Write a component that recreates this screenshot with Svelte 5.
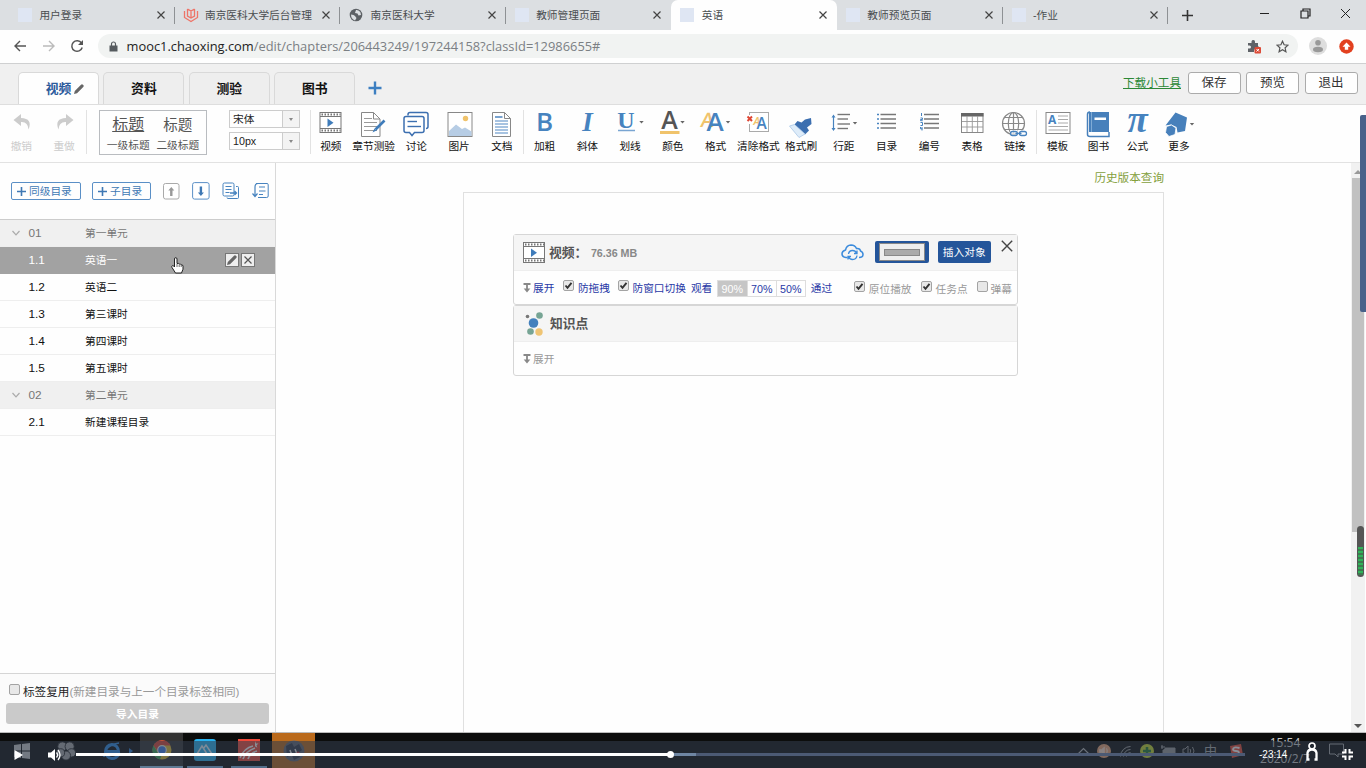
<script>
  const browserTabs = [
    { title: '用户登录', icon: 'blank' },
    { title: '南京医科大学后台管理', icon: 'book' },
    { title: '南京医科大学', icon: 'globe' },
    { title: '教师管理页面', icon: 'blank' },
    { title: '英语', icon: 'blank', active: true },
    { title: '教师预览页面', icon: 'blank' },
    { title: '-作业', icon: 'blank' },
  ];

  const courseTabs = ['视频', '资料', '测验', '图书'];
  let currentTab = $state('视频');

  const caret = (x, y = 11) => `<path d="M${x - 2.2} ${y}h4.4l-2.2 2.6z" fill="#666"/>`;
  const lines = (x1, x2, ys, color = '#777', w = 1) =>
    ys.map((y) => `<path d="M${x1} ${y}H${x2}" stroke="${color}" stroke-width="${w}"/>`).join('');

  // every icon is drawn on a 43 x 28 grid
  const icons = {
    video: `<rect x="11" y="2.5" width="21" height="20" fill="#fff" stroke="#777"/><path d="M11 6.5h21M11 18.5h21" stroke="#777"/><path d="M12.5 4.5h19M12.5 20.5h19" stroke="#777" stroke-width="2" stroke-dasharray="1.5 1.5"/><path d="M18.5 8.5l6 4.2-6 4.2z" fill="#3f7cba"/>`,
    quiz: `<path d="M9.5 2.5h12l6.5 6.5v17.5h-18.5z" fill="#fff" stroke="#888"/><path d="M21.5 2.5v6.5h6.5" fill="none" stroke="#888"/>${lines(12, 20, [8.5], '#999')}${lines(12, 25, [12.5, 16.5, 20.5], '#999')}<path d="M32.5 10.5L23.5 19.5" stroke="#3f7cba" stroke-width="2.6"/><path d="M22.500 18.500l-2 4 4-2z" fill="#3f7cba"/>`,
    talk: `<path d="M13 5.5V4.5q0-2 2-2h16q2 0 2 2v12q0 2-2 2" fill="none" stroke="#3c6fb0" stroke-width="1.5"/><path d="M11 6.5h16q2 0 2 2v12q0 2-2 2h-7.5l-2.5 3-2.5-3H11q-2 0-2-2v-12q0-2 2-2z" fill="#fff" stroke="#3c6fb0" stroke-width="1.5"/>${lines(12.5, 22, [11.5], '#3c6fb0', 1.4)}${lines(12.5, 26, [16.5], '#3c6fb0', 1.4)}`,
    image: `<rect x="10" y="2.5" width="24" height="24" fill="#fff" stroke="#888"/><circle cx="27.500" cy="8.500" r="2.700" fill="#f0c36b"/><path d="M11 21l7-6.500 6 4.500 3-1.500 6.500 4v4.500H11z" fill="#b7cde5"/>`,
    doc: `<path d="M12.5 2.5h12l6 6v18h-18z" fill="#fff" stroke="#888"/><path d="M24.5 2.5v6h6" fill="none" stroke="#888"/>${lines(15, 22.5, [7], '#3f7cba', 1.4)}${lines(15, 28, [11, 14, 17, 20, 23], '#5f93c8', 1.1)}`,
    bold: `<text x="21.5" y="21" text-anchor="middle" font-family="Open Sans" font-weight="600" font-size="26" fill="#4783bf">B</text>`,
    italic: `<text x="21.5" y="21" text-anchor="middle" font-family="Liberation Serif" font-weight="700" font-style="italic" font-size="27" fill="#4783bf">I</text>`,
    underline: `<text x="17" y="18" text-anchor="middle" font-family="Liberation Serif" font-weight="700" font-size="24" fill="#4783bf">U</text><path d="M9 20.5h17" stroke="#79a5d2" stroke-width="1.5"/>${caret(32.5)}`,
    color: `<text x="18.5" y="19" text-anchor="middle" font-family="Open Sans" font-weight="600" font-size="25" fill="#555">A</text><rect x="9" y="21" width="19.500" height="3" fill="#f0c36b"/>${caret(31.5)}`,
    format: `<text x="6" y="17" font-family="Open Sans" font-weight="600" font-size="20" fill="#f0c36b" transform="skewX(-8) translate(2.500 0)">A</text><text x="12.500" y="21" font-family="Open Sans" font-weight="600" font-size="26" fill="#4783bf">A</text>${caret(34)}`,
    clear: `<rect x="12.5" y="2.5" width="19" height="19" fill="#fff" stroke="#aaa"/><rect x="9" y="5" width="7" height="9" fill="#fff"/><path d="M10.5 6.5l4.500 4.500m0-4.500l-4.500 4.500" stroke="#df4634" stroke-width="2"/><text x="16.500" y="15" font-family="Open Sans" font-style="italic" font-weight="600" font-size="11" fill="#f0c36b">A</text><text x="19.500" y="18.500" font-family="Open Sans" font-weight="600" font-size="15.500" fill="#4783bf">A</text>`,
    brush: `<path d="M31 8l-6 1.5-3.5 3-4-1.5-3 3.5 10.5 10 4-4-2-3 4.5-3.5z" fill="#3c6fb0"/><path d="M14.5 14.5l-5 1.5 9.5 11.5 6-3.5z" fill="#deecf9" stroke="#a9c6e6" stroke-width=".8"/>`,
    spacing: `<path d="M11.5 6v14" stroke="#4783bf" stroke-width="1.2"/><path d="M9.5 7.500l2-3 2 3zM9.500 18l2 3 2-3z" fill="#4783bf"/>${lines(15.5, 28, [4.5, 14], '#777', 1.4)}${lines(15.5, 26, [9, 18.5], '#777', 1.4)}${caret(33, 12)}`,
    list: `${lines(15.5, 31, [4.5, 9, 13.5, 18], '#777', 1.5)}${lines(12, 14, [4.5, 9, 13.5, 18], '#4783bf', 1.6)}`,
    numbers: `${lines(16, 31, [4.5, 9, 13.5, 18], '#777', 1.5)}<path d="M13.5 3v3M12.5 8h2v1.500h-2v1.200h2.200M12.500 12.500h2v3h-2M12.500 17v1.800h2M14 17v3.500" fill="none" stroke="#4783bf"/>`,
    table: `<rect x="10.5" y="3.5" width="21.5" height="19" fill="#fff" stroke="#888"/><rect x="10" y="3" width="22.5" height="3.5" fill="#666"/><path d="M16 6v16M21.3 6v16M26.6 6v16M11 11.5h21M11 17h21" stroke="#999" stroke-width=".9"/>`,
    link: `<g fill="none" stroke="#888" stroke-width="1.2"><circle cx="20.5" cy="13.500" r="11"/><ellipse cx="20.500" cy="13.500" rx="5.200" ry="11"/><path d="M20.500 2.500v22M9.500 13.500h22M12 7.500h17M12 19.500h17"/></g><rect x="17" y="20" width="18" height="7" fill="#fff" opacity=".7"/><g fill="none" stroke="#4783bf" stroke-width="1.300"><rect x="17.500" y="21.500" width="7" height="4" rx="2"/><rect x="26.500" y="21.500" width="7" height="4" rx="2"/><path d="M22.500 23.500h6"/></g>`,
    template: `<rect x="10" y="2.5" width="24" height="21" fill="#fff" stroke="#888"/><text x="12" y="14" font-family="Open Sans" font-weight="700" font-size="12" fill="#4783bf">A</text>${lines(22, 32, [6, 9.5, 13], '#aaa', 1)}${lines(12.5, 32, [16.5, 20], '#aaa', 1)}`,
    book: `<path d="M12 2h20v20H12z" fill="#4780bb"/><path d="M13 2q-2.5 0-2.5 2.5v20q0 2 2.5 2h19V22" fill="none" stroke="#4780bb" stroke-width="1.5"/><path d="M14.5 2v20" stroke="#7fabd6"/><rect x="17.500" y="7.500" width="11.500" height="2.500" fill="#fff"/>`,
    pi: `<text x="21.500" y="22" text-anchor="middle" font-family="Liberation Serif" font-style="italic" font-weight="700" font-size="37" fill="#4783bf">π</text>`,
    more: `<path d="M17.5 2.5l11.500 5-2 13.500-7.500 1.500-1-5.500-5.500-2.500-5.500 1z" fill="#4780bb"/><path d="M8.500 16.500l5-1.500 4.500 3-1 6.500-6 2-3.500-4z" fill="#4780bb" stroke="#fff" stroke-width=".8"/>${caret(34, 13)}`,
  };

  const toolGroups = [
    [
      ['video', '视频'],
      ['quiz', '章节测验'],
      ['talk', '讨论'],
      ['image', '图片'],
      ['doc', '文档'],
    ],
    [
      ['bold', '加粗'],
      ['italic', '斜体'],
      ['underline', '划线'],
      ['color', '颜色'],
      ['format', '格式'],
      ['clear', '清除格式'],
      ['brush', '格式刷'],
      ['spacing', '行距'],
      ['list', '目录'],
      ['numbers', '编号'],
      ['table', '表格'],
      ['link', '链接'],
    ],
    [
      ['template', '模板'],
      ['book', '图书'],
      ['pi', '公式'],
      ['more', '更多'],
    ],
  ];

  const chapters = [
    { no: '01', name: '第一单元', unit: true },
    { no: '1.1', name: '英语一' },
    { no: '1.2', name: '英语二' },
    { no: '1.3', name: '第三课时' },
    { no: '1.4', name: '第四课时' },
    { no: '1.5', name: '第五课时' },
    { no: '02', name: '第二单元', unit: true },
    { no: '2.1', name: '新建课程目录' },
  ];
  let selected = $state('1.1');
</script>

{#snippet check(on)}
  <svg class="check" width="11" height="11" viewBox="0 0 11 11">
    <rect x=".5" y=".5" width="10" height="10" rx="1.5" fill="#e8e8e8" stroke="#a3a3a3" />
    {#if on}<path d="M2.5 5.5l2 2.3 4-5" fill="none" stroke="#333" stroke-width="1.9" />{/if}
  </svg>
{/snippet}

{#snippet pencil()}
  <svg width="10" height="10" viewBox="0 0 10 10">
    <path d="M0 10l.8-3L7 .8Q8-.2 9.200 1T9 3.200L3 9.200z" fill="#666" />
  </svg>
{/snippet}

{#snippet expand()}
  <svg width="8" height="10" viewBox="0 0 8 10">
    <path d="M.5 1h7M4 2v5" stroke="#888" stroke-width="1.8" /><path d="M.7 5.500h6.600L4 9.500z" fill="#888" />
  </svg>
{/snippet}

<div class="screen">
  <div class="tabstrip">
    {#each browserTabs as tab}
      <div class="btab" class:active={tab.active}>
        <span class="favicon">
          {#if tab.icon === 'book'}
            <svg width="16" height="16" viewBox="0 0 16 16" fill="none" stroke="#ee7468" stroke-width="1.3">
              <path d="M1.5 4v6.5L8 14.5l6.5-4V4M4.5 2v7L8 11l3.5-2V2M8 4v7M4.5 2L8 4l3.5-2" />
            </svg>
          {:else if tab.icon === 'globe'}
            <svg width="14" height="14" viewBox="0 0 14 14">
              <circle cx="7" cy="7" r="6.3" fill="#5d6165" />
              <path d="M2 6.5q3 0 4 1.500t1.500 2L6 12.500Q2 11 2 6.500zM7 2q3-.5 4.500 2.500L12 7 9.500 7.500 8.500 5.500 6 5z" fill="#dcdfe2" />
            </svg>
          {:else}
            <span class="blank"></span>
          {/if}
        </span>
        <span class="btitle">{tab.title}</span>
        <svg width="8" height="8" viewBox="0 0 8 8"><path d="M.5.5l7 7m0-7l-7 7" stroke="#444" stroke-width="1.2" /></svg>
      </div>
    {/each}
    <svg class="newtab" width="11" height="11" viewBox="0 0 11 11"><path d="M5.500 0v11M0 5.500h11" stroke="#333" stroke-width="1.600" /></svg>
    <div class="winbtns">
      <svg width="11" height="11" viewBox="0 0 11 11"><path d="M1 5.500h9" stroke="#222" /></svg>
      <svg width="11" height="11" viewBox="0 0 11 11" fill="none" stroke="#222" stroke-width="1.200"><path d="M1 3h7v7H1zM3 3V1h7v7H8" /></svg>
      <svg width="11" height="11" viewBox="0 0 11 11"><path d="M1 1l9 9m0-9l-9 9" stroke="#222" /></svg>
    </div>
  </div>

  <div class="addressbar">
    <svg class="nav" width="14" height="14" viewBox="0 0 14 14" fill="none" stroke="#555" stroke-width="1.4"><path d="M13 7H2M7 2L2 7l5 5" /></svg>
    <svg class="nav" width="14" height="14" viewBox="0 0 14 14" fill="none" stroke="#bbb" stroke-width="1.4"><path d="M1 7h11M7 2l5 5-5 5" /></svg>
    <svg class="nav" width="14" height="14" viewBox="0 0 14 14"><path d="M11.500 4A5.300 5.300 0 1 0 12.200 8.500" fill="none" stroke="#555" stroke-width="1.500" /><path d="M13 1v5H8z" fill="#555" /></svg>
    <div class="omnibox">
      <svg width="9" height="11" viewBox="0 0 9 11"><path d="M.5 4.500h8V10.500h-8z" fill="#555a5e" /><path d="M2.500 5V3a2 2 0 0 1 4 0v2" fill="none" stroke="#555a5e" stroke-width="1.200" /></svg>
      <span class="url"><b>mooc1.chaoxing.com</b>/edit/chapters/206443249/197244158?classId=12986655#</span>
      <svg class="ext" width="15" height="15" viewBox="0 0 15 15">
        <path d="M1 4h3.500V2.500a1.800 1.800 0 0 1 3.500 0V4h3v3.500h1v3H7V13H1V9.500h1.500a1.500 1.500 0 0 0 0-3H1z" fill="#5f6368" />
        <rect x="7.500" y="8" width="6.500" height="6.500" rx="1" fill="#dc4b37" /><path d="M9.500 10l2.500 2.500m0-2.500l-2.500 2.500" stroke="#fff" />
      </svg>
      <svg width="13" height="13" viewBox="0 0 13 13"><path d="M6.500 1.200l1.600 3.600 3.900.4-2.900 2.600.8 3.900-3.400-2-3.400 2 .8-3.900L1 5.200l3.900-.4z" fill="none" stroke="#555" stroke-width="1.200" /></svg>
    </div>
    <svg class="avatar" width="18" height="18" viewBox="0 0 18 18"><circle cx="9" cy="9" r="9" fill="#dedede" /><circle cx="9" cy="5.800" r="2.800" fill="#999" /><ellipse cx="9" cy="12.500" rx="5" ry="2.700" fill="#999" /></svg>
    <svg width="15" height="15" viewBox="0 0 15 15"><circle cx="7.500" cy="7.500" r="7.200" fill="#e2401f" /><path d="M7.500 3.500l4 4.300H9.200v3H5.800v-3H3.500z" fill="#fff" /></svg>
  </div>

  <div class="coursebar">
    {#each courseTabs as tab}
      <button class="ctab" class:current={currentTab === tab} onclick={() => (currentTab = tab)}>
        {tab}{#if currentTab === tab}{@render pencil()}{/if}
      </button>
    {/each}
    <svg class="addtab" width="14" height="14" viewBox="0 0 14 14"><path d="M7 .5v13M.5 7h13" stroke="#3d7fc1" stroke-width="2.400" /></svg>
    <div class="actions">
      <a href="#tools">下载小工具</a>
      <button>保存</button>
      <button>预览</button>
      <button>退出</button>
    </div>
  </div>

  <div class="toolbar">
    <div class="history-tools">
      <div class="tool off">
        <svg width="43" height="28" viewBox="0 0 43 28"><path d="M21 4l-7.500 6 7.500 6v-4q7-.5 7.500 7.500 4.500-11-7.500-11.500z" fill="#ccc" /></svg>
        <span>撤销</span>
      </div>
      <div class="tool off">
        <svg width="43" height="28" viewBox="0 0 43 28"><path d="M23 4l7.500 6-7.500 6v-4q-7-.5-7.500 7.500-4.500-11 7.500-11.500z" fill="#ccc" /></svg>
        <span>重做</span>
      </div>
    </div>
    <div class="headings">
      <div><b class="h1">标题</b><span>一级标题</span></div>
      <div><b>标题</b><span>二级标题</span></div>
    </div>
    <div class="selects">
      <div class="select"><span>宋体</span><i></i></div>
      <div class="select"><span>10px</span><i></i></div>
    </div>
    {#each toolGroups as group}
      <div class="group">
        {#each group as [icon, label]}
          <div class="tool">
            <svg width="43" height="28" viewBox="0 0 43 28">{@html icons[icon]}</svg>
            <span>{label}</span>
          </div>
        {/each}
      </div>
    {/each}
  </div>

  <div class="main">
    <aside>
      <div class="sidetools">
        <button class="wide"><svg width="9" height="9" viewBox="0 0 9 9"><path d="M4.500 0v9M0 4.500h9" stroke="#3f78b4" stroke-width="1.600" /></svg>同级目录</button>
        <button class="wide sub"><svg width="9" height="9" viewBox="0 0 9 9"><path d="M4.500 0v9M0 4.500h9" stroke="#3f78b4" stroke-width="1.600" /></svg>子目录</button>
        <svg width="17" height="17" viewBox="0 0 17 17"><rect x=".5" y=".5" width="15.500" height="15.500" rx="2" fill="#fff" stroke="#aaa" /><path d="M8.300 4l3 3.500H9.500V13H7.100V7.500H5.300z" fill="#999" /></svg>
        <svg class="down" width="18" height="18" viewBox="0 0 18 18"><rect x=".6" y=".6" width="16.500" height="16.500" rx="2" fill="#fff" stroke="#5a8fc6" /><path d="M8.900 14l3-3.500h-1.800V4.500H7.700v6H5.900z" fill="#3f78b4" /></svg>
        <svg class="copy" width="18" height="18" viewBox="0 0 18 18" fill="none" stroke="#4783bf"><rect x="1" y="1" width="11" height="13" rx="1.500" /><path d="M3.500 4.500h6M3.500 7.500h6M3.500 10.500h4M14 4.500h1.500q1 0 1 1v10q0 1-1 1H6q-1 0-1-1" /><path d="M8 11h6M12.500 9l2 2-2 2" stroke-width="1.300" /></svg>
        <svg width="18" height="18" viewBox="0 0 18 18" fill="none" stroke="#4783bf"><path d="M8 5h6M8 9h6.500M8 12.500h4M5 1.500h11q1.200 0 1.200 1.200V14q0 1.500-1.500 1.500H7" /><path d="M7 1.500Q4 1.500 4 5v9M1.500 11.500L4 14.500l2.500-3" stroke-width="1.200" /></svg>
      </div>
      <ul>
        {#each chapters as row}
          <li class:unit={row.unit} class:selected={selected === row.no}>
            <span class="fold">
              {#if row.unit}<svg width="8" height="6" viewBox="0 0 8 6"><path d="M.5 1L4 4.800 7.500 1" fill="none" stroke="#aaa" stroke-width="1.200" /></svg>{/if}
            </span>
            <span class="no">{row.no}</span>
            <span class="name">{row.name}</span>
            {#if selected === row.no}
              <span class="rowbtn">{@render pencil()}</span>
              <span class="rowbtn"><svg width="8" height="8" viewBox="0 0 8 8"><path d="M.5.5l7 7m0-7l-7 7" stroke="#555" stroke-width="1.200" /></svg></span>
            {/if}
          </li>
        {/each}
      </ul>
      <div class="sidefoot">
        <div class="reuse">{@render check(false)}<span>标签复用<em>(新建目录与上一个目录标签相同)</em></span></div>
        <button>导入目录</button>
      </div>
    </aside>

    <div class="editor">
      <div class="history">历史版本查询</div>
      <div class="paper">
        <div class="card">
          <div class="cardhead">
            <svg width="22" height="21" viewBox="10.5 2 22 21">{@html icons.video}</svg>
            <b>视频：</b>
            <span class="size">76.36 MB</span>
            <svg class="cloud" width="23" height="17" viewBox="0 0 23 17" fill="none" stroke="#3b8bdc" stroke-width="1.5">
              <path d="M6.500 13.500H5Q1 13 1 9.800 1 7 4.500 6 5.500 1.200 10 1q4 0 5.500 3.500 3.500-.5 4 2.500 2.500 1 2.500 3.500 0 3-4 3" />
              <path d="M7.500 10q.5-3.500 4-3.500 3 0 4 2.500M16 11.500q-.5 4-4.500 4-3 0-4-3M16 6.500V9.500h-3M7 15.500v-3h3" stroke-width="1.300" />
            </svg>
            <span class="bluebtn"><span class="flash"><i></i></span></span>
            <span class="bluebtn insert">插入对象</span>
            <svg class="close" width="12" height="12" viewBox="0 0 12 12"><path d="M.8.8l10.400 10.400m0-10.400L.8 11.200" stroke="#444" stroke-width="1.400" /></svg>
          </div>
          <div class="cardbody">
            {@render expand()}<span class="t1">展开</span>
            {@render check(true)}<span class="t2">防拖拽</span>
            {@render check(true)}<span class="t3">防窗口切换</span>
            <span>观看</span>
            <span class="rates"><i class="on">90%</i><i>70%</i><i>50%</i></span>
            <span>通过</span>
            <span class="right">
              {@render check(true)}<span class="r1">原位播放</span>
              {@render check(true)}<span class="r2">任务点</span>
              {@render check(false)}<span>弹幕</span>
            </span>
          </div>
        </div>
        <div class="card second">
          <div class="cardhead">
            <svg class="knots" width="22" height="24" viewBox="0 0 22 24">
              <circle cx="9.500" cy="11" r="4.800" fill="#4380bd" /><circle cx="15.500" cy="3.500" r="3.300" fill="#76a494" /><circle cx="3.500" cy="4.500" r="1.800" fill="#777" />
              <circle cx="6.500" cy="19.500" r="3.300" fill="#76a494" /><circle cx="15" cy="20" r="3.700" fill="#efc473" />
            </svg>
            <b>知识点</b>
          </div>
          <div class="cardbody grey">{@render expand()}<span>展开</span></div>
        </div>
      </div>
    </div>
    <div class="scroll">
      <i class="arrow top"></i>
      <div class="thumb"></div>
      <i class="arrow"></i>
    </div>
  </div>

  <div class="taskbar">
    <div class="slot start"><svg width="16" height="16" viewBox="0 0 16 16" fill="#ccc"><path d="M0 2l7-1v6.500H0zM8 .9L16 0v7.500H8zM0 8.500h7V15l-7-1zM8 8.500h8V16l-8-1z" /></svg></div>
    <div class="slot fan">
      <svg width="20" height="20" viewBox="0 0 22 22" fill="#aaa" stroke="#222"><circle cx="7" cy="6" r="5" /><circle cx="15" cy="6" r="5" /><circle cx="17" cy="13" r="4.500" /><circle cx="11" cy="16" r="5" /><circle cx="5" cy="13" r="4.500" /></svg>
    </div>
    <div class="slot edge">
      <svg width="18" height="18" viewBox="0 0 18 18" fill="none" stroke="#2f8ee6"><path d="M15.500 12.500q-2 4-6.500 4-6-.5-6.500-7Q3 3 9 2.500q6 .5 6.500 7H4" stroke-width="3" /><path d="M1 15Q2 3 16 1" stroke-width="1.500" /></svg>
      <i></i>
    </div>
    <div class="slot on">
      <svg width="20" height="20" viewBox="0 0 20 20"><circle cx="10" cy="10" r="9.500" fill="#e8c234" /><path d="M1.500 5.500A9.500 9.500 0 0 1 18.500 5.500H10A4.500 4.500 0 0 0 6 12z" fill="#df4638" /><path d="M1.500 5.500L7 14.500l3 0-2 4.800A9.500 9.500 0 0 1 1.500 5.500z" fill="#3ea55a" /><circle cx="10" cy="10" r="4.300" fill="#3f7ff0" stroke="#eee" stroke-width="1.200" /></svg>
    </div>
    <div class="slot line">
      <svg width="22" height="22" viewBox="0 0 22 22"><rect width="22" height="22" rx="3" fill="#29b3f0" /><path d="M3 15L8 7l5 8M9.500 9.500L12 6l6 9" fill="none" stroke="#e4f6ff" stroke-width="1.500" /></svg>
    </div>
    <div class="slot line red">
      <svg width="22" height="22" viewBox="0 0 22 22"><rect width="22" height="22" fill="#f04a3a" /><path d="M2 19Q6 9 15 7M5 20q3-8 12-11M10 20q2-6 9-8" fill="none" stroke="#fff" stroke-width="1.700" /><path d="M17 2l1 2.500h2.500l-2 1.700.8 2.500-2.300-1.500z" fill="#fff" /></svg>
    </div>
    <div class="slot orange">
      <svg width="22" height="22" viewBox="0 0 22 22"><circle cx="11" cy="11" r="10.500" fill="#626673" /><path d="M3 6l6-3 2 4 5-3 3 6-4 3 2 4-6 3-2-5-5 2z" fill="#343a4a" /><path d="M7 10l2 6M12 9l2 5M6 14l3-1" stroke="#eee" stroke-width="1.500" /><circle cx="15" cy="13" r="1.500" fill="#c43c44" /></svg>
    </div>
    <div class="tray">
      <svg width="140" height="18" viewBox="0 0 140 18">
        <path d="M1 12l5.500-5.500L12 12" fill="none" stroke="#bbb" stroke-width="1.200" />
        <circle cx="27" cy="9" r="7" fill="#f0a878" /><path d="M22.500 7.500h2l3-2.500v8l-3-2.500h-2zM29.500 6q2 3 0 6" fill="#ffe0cc" stroke="#ffe0cc" stroke-width=".7" />
        <path d="M43.500 14.500a10 10 0 0 1 10-10M46.500 14.500a7 7 0 0 1 7-7M49.500 14.500a4 4 0 0 1 4-4" fill="none" stroke="#aaa" />
        <circle cx="70" cy="9" r="7" fill="#c6d82d" /><path d="M70 5v8M66 9h8" stroke="#237c32" stroke-width="2.500" />
        <path d="M88 6h10v7H86V8" fill="#999" stroke="#999" /><path d="M84 5h4M85 3v4" stroke="#aaa" />
        <path d="M106 7h2l3-3v10l-3-3h-2zM113 7q1.500 2 0 4M115.500 5q3 4 0 8" fill="none" stroke="#999" />
      </svg>
      <span>中</span>
      <svg class="sogou" width="14" height="14" viewBox="0 0 14 14"><path d="M1 2l11-2 2 11-11 3z" fill="#ef4b34" /><path d="M10.500 4Q4 2.500 4 5.300 4 7 7 7t3 2.300Q9.500 11.500 3.500 10" fill="none" stroke="#fff" stroke-width="1.800" /></svg>
      <div class="clock"><span>15:54</span><span>2020/2/7</span></div>
      <svg class="note" width="15" height="15" viewBox="0 0 15 15"><path d="M.5 1h14v10H9v3l-3-3H.5z" fill="none" stroke="#aaa" /></svg>
    </div>
    <div class="player">
      <svg width="9" height="10" viewBox="0 0 9 10"><path d="M.5 0L9 5 .5 10z" fill="#fff" /></svg>
      <svg class="vol" width="13" height="12" viewBox="0 0 13 12"><path d="M0 3.500h3L7 0v12L3 8.500H0z" fill="#fff" /><path d="M8.500 3.500q2 2.500 0 5M10 1q4 5 0 10" fill="none" stroke="#fff" stroke-width="1.300" /></svg>
      <div class="track"><div class="buffer"></div><div class="played"></div><div class="knob"></div></div>
      <span class="left">-23:14</span>
      <svg class="lock" width="12" height="19" viewBox="0 0 12 19"><circle cx="6" cy="4" r="3" fill="none" stroke="#fff" stroke-width="1.700" /><path d="M3.500 17.500H1.500V11Q2 7.500 6 7.500t4.500 3.500v6.500H8.500" fill="none" stroke="#fff" stroke-width="2.300" /></svg>
      <svg width="11" height="11" viewBox="0 0 11 11"><path d="M0 3.500h3.500V0M7.500 0v3.500H11M0 7.500h3.500V11M7.500 11V7.500H11" fill="none" stroke="#fff" stroke-width="2" /></svg>
    </div>
  </div>

  <div class="sidebadge"></div>
  <div class="meter"><i></i></div>
  <svg class="pointer" width="13" height="17" viewBox="0 0 13 17">
    <path d="M3.500 10V2q0-1.300 1.200-1.300T6 2v4.500q1.800-.6 2.200.6 1.600-.4 2 .7 1.800-.2 1.800 1.400v3L10.500 16h-6L1 10.500q-.8-1.500.5-1.800T3.500 10z" fill="#fff" stroke="#222" />
    <path d="M6 7v3M8.200 7.500V10M10.200 8v2" stroke="#444" stroke-width=".8" />
  </svg>
</div>

<style>
  :global(body) { background: #fff; overflow: hidden; }

  .screen {
    position: relative;
    display: flex;
    flex-direction: column;
    width: 1366px;
    height: 768px;
    overflow: hidden;
    background: #fefefe;
    font: 10.7px/14px "Liberation Sans", "Noto Sans CJK SC", sans-serif;
    color: #222;
  }
  .screen * { box-sizing: border-box; }
  svg { display: block; flex: none; }
  button { font: inherit; margin: 0; padding: 0; white-space: nowrap; }
  i, em { font-style: normal; }
  span, b { white-space: nowrap; }

  .tabstrip { display: flex; align-items: center; height: 30px; padding-left: 9px; background: #dcdfe2; }
  .btab {
    display: flex;
    align-items: center;
    width: 165.6px;
    height: 30px;
    padding: 0 10px 0 9px;
    background: linear-gradient(#8e9194, #8e9194) right center / 1px 17px no-repeat;
    color: #4a4d50;
  }
  .btab.active { background: #fefefe; border-radius: 7px 7px 0 0; }
  .btab:has(+ .active) { background: none; }
  .favicon { display: flex; justify-content: center; width: 14px; margin-right: 7.4px; }
  .blank { width: 14px; height: 14px; background: #dfe6f3; }
  .btitle { flex: 1; }
  .newtab { margin-left: 14px; }
  .winbtns { display: flex; gap: 29.5px; margin: 0 15px 4px auto; }

  .addressbar { display: flex; align-items: center; height: 34px; padding: 0 0 1px 13px; border-bottom: 1px solid #cfd0d1; }
  .nav { margin-right: 14.5px; }
  .omnibox { display: flex; align-items: center; width: 1200px; height: 24px; margin-left: -1px; padding: 0 9px 0 11px; border-radius: 12px; background: #f1f3f2; }
  .url { flex: 1; margin: -1px 0 0 9px; font: 12.87px/20px "Open Sans", sans-serif; color: #7b8084; }
  .url b { font-weight: 400; color: #222; }
  .ext { margin-right: 14px; }
  .avatar { margin: 0 12.5px 0 11px; }

  .coursebar { display: flex; height: 41px; padding: 8px 8.5px 0 18px; background: #f0f0f0; border-bottom: 1px solid #dedede; }
  .ctab {
    display: flex;
    align-items: center;
    justify-content: center;
    width: 81px;
    height: 32px;
    margin-right: 4.4px;
    border: 1px solid #d9d9d9;
    border-bottom: 0;
    border-radius: 5px 5px 0 0;
    background: #eee;
    color: #111;
    font-size: 12.8px;
    font-weight: 700;
  }
  .ctab.current { background: #fefefe; color: #2d5b9c; padding-left: 13px; }
  .ctab svg { margin-left: 3px; }
  .addtab { margin: 9px 0 0 8px; }
  .actions { display: flex; align-items: center; gap: 5.500px; height: 22px; margin-left: auto; }
  .actions a { margin-right: 1px; color: #2c8836; font-size: 11.6px; }
  .actions button { width: 53px; height: 22px; border: 1px solid #ababab; border-radius: 3px; background: #fefefe; color: #333; font-size: 12.5px; }

  .toolbar { display: flex; height: 58px; border-bottom: 1px solid #e2e2e2; }
  .history-tools { display: flex; width: 87px; background: linear-gradient(#e2e2e2, #e2e2e2) right 5px / 1px 44px no-repeat; }
  .tool { display: flex; flex-direction: column; align-items: center; width: 42.75px; padding-top: 5px; }
  .tool svg { overflow: visible; }
  .tool span { margin-top: 1px; color: #111; }
  .tool.off span { color: #ccc; }
  .headings {
    display: flex;
    width: 108px;
    height: 45px;
    margin: 5px 0 0 12px;
    border: 1px solid #b9bcc0;
    justify-content: space-evenly;
  }
  .headings div { display: flex; flex-direction: column; align-items: center; color: #555; }
  .headings b { height: 25px; margin-top: 2px; font-size: 14.5px; line-height: 24px; font-weight: 400; }
  .headings .h1 { font-size: 16px; text-decoration: underline; }
  .selects { display: flex; flex-direction: column; gap: 4px; width: 71px; margin: 5px 9.5px 0 22px; }
  .select { display: flex; height: 18px; border: 1px solid #ccc; }
  .select span { flex: 1; padding-left: 3px; line-height: 16px; color: #222; }
  .select i { display: flex; align-items: center; justify-content: center; width: 17px; border-left: 1px solid #ccc; background: #f3f3f3; }
  .select i::after { content: ''; border: 2.5px solid transparent; border-top: 3px solid #888; border-bottom: 0; }
  .group { display: flex; height: 57px; background: linear-gradient(#e2e2e2, #e2e2e2) 0 5px / 1px 44px no-repeat; }
  .group:last-child .tool + .tool { width: 39px; }
  .group:last-child .tool:last-child { width: 44px; }

  .main { display: flex; flex: 1; min-height: 0; border-bottom: 1px solid #bbb; }
  aside { display: flex; flex-direction: column; width: 276px; border-right: 1px solid #d9d9d9; }
  .sidetools { display: flex; align-items: center; height: 57px; padding-left: 11px; border-bottom: 1px solid #ccc; }
  .wide { display: flex; align-items: center; gap: 3px; width: 70px; height: 18px; padding-left: 5px; border: 1px solid #5a8fc6; border-radius: 2px; background: #fefefe; color: #3f78b4; }
  .wide.sub { width: 59px; margin: 0 12px 0 11px; }
  .down { margin: 0 12px; }
  .copy { margin-right: 11px; }
  ul { flex: 1; margin: 0; padding: 0; list-style: none; }
  li { display: flex; align-items: center; height: 27px; border-bottom: 1px solid #eee; color: #111; }
  li.unit { background: #f0f0f0; color: #777; }
  li.selected { background: #a2a2a2; border-color: #a2a2a2; color: #fff; }
  .fold { width: 28.5px; padding-left: 12px; }
  .no { width: 56.5px; font-size: 11.8px; }
  .name { flex: 1; }
  .rowbtn { display: flex; align-items: center; justify-content: center; width: 14px; height: 14px; margin-right: 2.5px; border: 1px solid #777; background: #eee; }
  .rowbtn:last-child { margin-right: 20px; }
  .sidefoot { height: 59px; padding: 10px 6px 0; border-top: 1px solid #d5d5d5; background: #fbfbfb; }
  .reuse { display: flex; height: 19px; padding-left: 3px; gap: 3px; font-size: 11.6px; line-height: 16px; }
  .reuse .check { margin-top: 0; }
  .reuse em { color: #999; }
  .sidefoot button { display: block; width: 263px; height: 21px; border: 0; border-radius: 3px; background: #cacaca; color: #fff; font-weight: 700; }

  .editor { display: flex; flex: 1; flex-direction: column; padding: 0 187px; }
  .history { height: 29px; padding-top: 8px; text-align: right; color: #84a03c; font-size: 11.6px; }
  .paper { flex: 1; padding: 41px 145px 0 49px; border: 1px solid #e0e0e0; border-bottom: 0; }
  .card { height: 71px; border: 1px solid #d6d6d6; border-radius: 3px; background: #fefefe; }
  .cardhead { display: flex; align-items: center; height: 36px; padding-left: 9px; border-bottom: 1px solid #eee; background: #f5f5f5; color: #555; }
  .cardhead b { margin-left: 4px; font-size: 12.8px; }
  .size { margin-left: 3.5px; color: #888; font-weight: 700; }
  .cloud { margin: 0 11px 0 auto; }
  .bluebtn { display: flex; align-items: center; justify-content: center; width: 53.5px; height: 22px; margin-top: -2px; border-radius: 2px; background: #24559a; color: #fff; }
  .insert { margin-left: 9px; }
  .flash { width: 46px; height: 18px; padding: 5px 4px; border: 1px solid #888; background: #eee; }
  .flash i { display: block; height: 7px; border: 1px solid #888; background: #aaa; }
  .close { margin: -13px 4px 0 10px; }
  .cardbody { display: flex; align-items: center; height: 34px; padding-left: 9px; color: #2839a6; }
  .check { margin-top: -6px; }
  .t1 { margin: 0 9px 0 2px; }
  .t2 { margin: 0 8px 0 3.5px; }
  .t3 { margin: 0 5px 0 3.5px; }
  .rates { display: flex; height: 17px; margin: 0 5px 0 4.5px; border: 1px solid #ddd; line-height: 16px; }
  .rates i { width: 29px; text-align: center; border-left: 1px solid #ddd; }
  .rates .on { background: #c6c6c6; color: #fff; border: 0; }
  .right { display: flex; align-items: center; margin: 2px 5px 0 auto; color: #999; }
  .r1, .r2 { margin: 0 9px 0 4px; }
  .right span:last-child { margin-left: 3px; }
  .knots { margin-left: 1px; }
  .grey { color: #999; }
  .grey span { margin-left: 2px; }

  .scroll { display: flex; flex-direction: column; align-items: center; width: 14px; margin-right: 1px; padding: 7px 0 4px; background: #f1f1f1; }
  .arrow { border: 4px solid transparent; border-top: 4px solid #555; border-bottom: 0; }
  .arrow.top { border-top: 0; border-bottom: 4px solid #999; }
  .thumb { width: 12px; height: 354px; margin: 4px 0 auto; background: #c1c1c1; }

  .taskbar { position: relative; display: flex; height: 35px; background: #0c0d0c; }
  .slot { display: flex; align-items: center; justify-content: center; width: 43px; height: 35px; }
  .fan { margin-left: 1px; }
  .edge { gap: 8px; width: 48px; margin: 0 1px 0 4px; padding-left: 6px; }
  .edge i { border: 3px solid transparent; border-left: 4px solid #2f7fd6; border-right: 0; }
  .slot.on { background: #333; border-bottom: 2px solid #9dd0f7; }
  .slot.line { width: 36px; margin-left: 4px; border-bottom: 2px solid #7fb4df; }
  .slot.red { margin-left: 8px; }
  .orange { margin-left: 5px; background: #ba6a1b; }
  .tray { display: flex; align-items: center; margin-left: auto; color: #aaa; }
  .tray > span { margin-left: -13px; font-size: 13px; }
  .sogou { margin: 0 18px 0 12px; }
  .clock { display: flex; flex-direction: column; align-items: center; width: 48px; font: 12px/16px "Open Sans", sans-serif; color: #ccc; }
  .note { margin: 0 22px 0 20px; }

  .player { position: absolute; inset: 8px 0 0; display: flex; align-items: center; padding-left: 14px; background: rgba(50, 60, 76, 0.58); color: #fff; }
  .vol { margin: 0 15px 0 25px; }
  .track { position: relative; width: 1169px; height: 3px; background: #4c5a74; }
  .buffer, .played { position: absolute; left: 0; top: 0; height: 3px; width: 620px; background: #6f86a3; }
  .played { width: 595px; background: #fff; }
  .knob { position: absolute; left: 591px; top: -2px; width: 7px; height: 7px; border-radius: 50%; background: #fff; }
  .left { width: 28px; margin: 0 19px 0 14px; font-size: 10px; }
  .lock { margin: -6px 24px 0 0; }

  .sidebadge { position: absolute; left: 1360px; top: 115px; width: 8px; height: 197px; border-radius: 2px; background: #48618a; }
  .meter { position: absolute; left: 1357px; top: 526px; width: 7px; height: 51px; padding: 21px 1px 2px; border-radius: 4px; background: #555; }
  .meter i { display: block; height: 28px; background: repeating-linear-gradient(#31b35a 0 2px, #3f7a50 2px 4px); }
  .pointer { position: absolute; left: 171px; top: 257px; }
</style>
